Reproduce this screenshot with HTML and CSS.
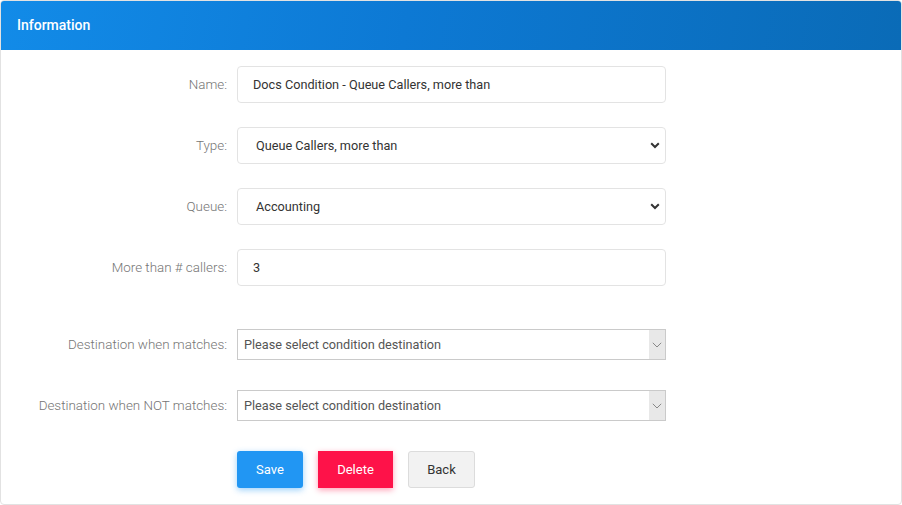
FILE: index.html
```html
<!DOCTYPE html>
<html>
<head>
<meta charset="utf-8">
<link rel="stylesheet" href="styles.css">
</head>
<body>
<div class="card">
  <div class="card-header">Information</div>
  <div class="card-body">
    <div class="row">
      <label class="label">Name:</label>
      <div class="control input">Docs Condition - Queue Callers, more than</div>
    </div>
    <div class="row">
      <label class="label">Type:</label>
      <div class="control select"><span>Queue Callers, more than</span>
        <svg class="chev" width="10" height="7" viewBox="0 0 10 7"><path d="M1.2 1.2 L5 5 L8.8 1.2" fill="none" stroke="#333" stroke-width="2"/></svg>
      </div>
    </div>
    <div class="row">
      <label class="label">Queue:</label>
      <div class="control select"><span>Accounting</span>
        <svg class="chev" width="10" height="7" viewBox="0 0 10 7"><path d="M1.2 1.2 L5 5 L8.8 1.2" fill="none" stroke="#333" stroke-width="2"/></svg>
      </div>
    </div>
    <div class="row row-gap-lg">
      <label class="label">More than # callers:</label>
      <div class="control input">3</div>
    </div>
    <div class="row row-dest">
      <label class="label">Destination when matches:</label>
      <div class="control dest"><span>Please select condition destination</span>
        <div class="dest-arrow"><svg width="10" height="6" viewBox="0 0 10 6"><path d="M0.8 0.8 L5 5 L9.2 0.8" fill="none" stroke="#888" stroke-width="1"/></svg></div>
      </div>
    </div>
    <div class="row row-dest">
      <label class="label">Destination when NOT matches:</label>
      <div class="control dest"><span>Please select condition destination</span>
        <div class="dest-arrow"><svg width="10" height="6" viewBox="0 0 10 6"><path d="M0.8 0.8 L5 5 L9.2 0.8" fill="none" stroke="#888" stroke-width="1"/></svg></div>
      </div>
    </div>
    <div class="row buttons">
      <div class="label"></div>
      <div class="btns">
        <button class="btn btn-save">Save</button>
        <button class="btn btn-delete">Delete</button>
        <button class="btn btn-back">Back</button>
      </div>
    </div>
  </div>
</div>
</body>
</html>
```
FILE: styles.css
```css
* { box-sizing: border-box; }
html, body { margin: 0; padding: 0; background: #fff; }
body {
  font-family: Roboto, "Liberation Sans", Arial, sans-serif;
  font-size: 13px;
  color: #333;
  width: 902px;
  height: 505px;
  overflow: hidden;
}
.card {
  width: 902px;
  height: 505px;
  border: 1px solid #e2e2e2;
  border-radius: 4px;
  overflow: hidden;
  background: #fff;
}
.card-header {
  height: 49px;
  background: linear-gradient(100deg, #128be8 0%, #0d79d4 45%, #0a6bb7 100%);
  color: #fff;
  font-size: 14px;
  font-weight: 500;
  padding-left: 16px;
  line-height: 48px;
}
.card-body {
  padding-top: 16px;
  display: flex;
  flex-direction: column;
}
.row {
  display: flex;
  align-items: center;
  margin-bottom: 24px;
}
.row-gap-lg { margin-bottom: 43px; }
.row-dest { margin-bottom: 30px; }
.label {
  width: 236px;
  flex: none;
  padding-right: 10px;
  text-align: right;
  color: #757575;
  font-weight: 300;
  font-size: 13.4px;
}
.control {
  width: 429px;
  flex: none;
  height: 37px;
  border: 1px solid #e3e3e3;
  border-radius: 4px;
  display: flex;
  align-items: center;
  color: #333;
  font-size: 12.7px;
}
.input { padding-left: 15px; }
.select { padding-left: 18px; padding-right: 4px; justify-content: space-between; }
.select span { flex: 1; }
.chev { margin-right: 1px; }
.dest {
  height: 31px;
  border: 1px solid #cacaca;
  border-radius: 0;
  padding-left: 6px;
  color: #555;
  align-items: stretch;
}
.dest span { flex: 1; display: flex; align-items: center; }
.dest-arrow {
  width: 16px;
  background: #e8e8e8;
  display: flex;
  align-items: center;
  justify-content: center;
}
.buttons { margin-bottom: 0; }
.btns { display: flex; gap: 15px; }
.btn {
  height: 37px;
  font-family: inherit;
  font-size: 13px;
  border: none;
  cursor: pointer;
}
.btn-save {
  width: 66px;
  background: #2196f3;
  color: #fff;
  border-radius: 3px;
  box-shadow: 0 2px 6px rgba(33, 150, 243, 0.45);
}
.btn-delete {
  width: 75px;
  background: #fe1249;
  color: #fff;
  border-radius: 0;
  box-shadow: 0 2px 6px rgba(254, 18, 73, 0.4);
}
.btn-back {
  width: 67px;
  background: #f2f2f2;
  color: #333;
  border: 1px solid #dcdcdc;
  border-radius: 3px;
}
```
